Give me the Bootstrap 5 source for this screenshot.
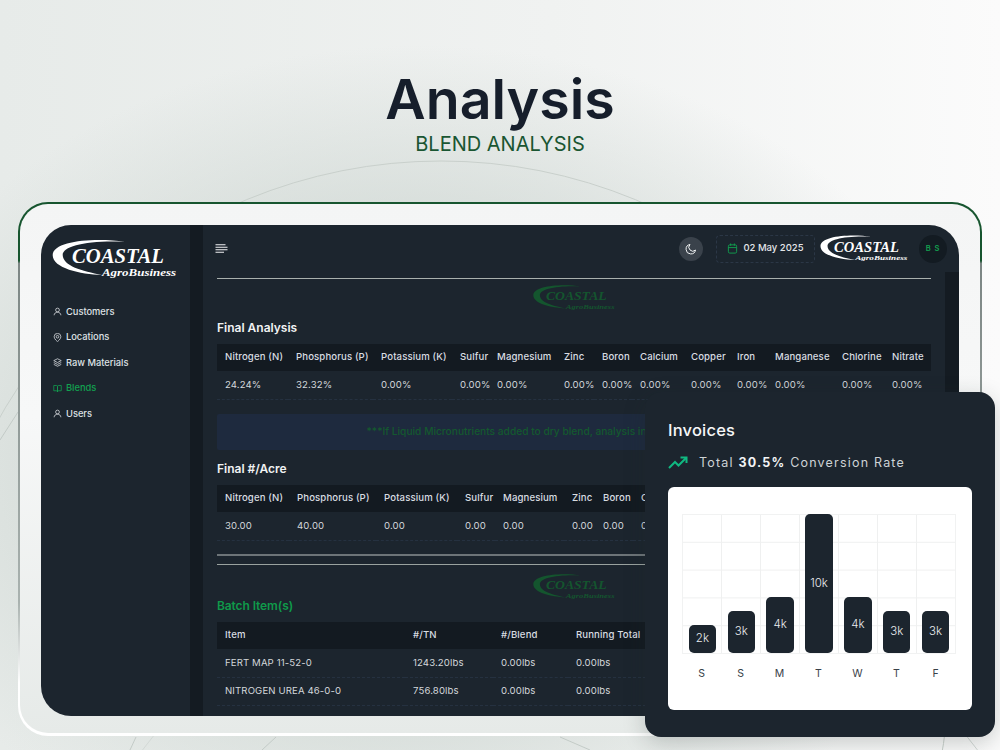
<!DOCTYPE html>
<html lang="en">
<head>
  <meta charset="UTF-8" />
  <meta name="viewport" content="width=device-width, initial-scale=1.0" />
  <title>Blend Analysis</title>
  <link href="https://cdn.jsdelivr.net/npm/bootstrap@5.3.3/dist/css/bootstrap.min.css" rel="stylesheet">
  <style>
    html, body { height: 750px; }
    body {
      width: 1000px;
      overflow: hidden;
      font-family: Inter, "Liberation Sans", sans-serif;
      background:
        radial-gradient(ellipse 560px 420px at 42% 62%, #c6d0cb 0%, rgba(198,208,203,.75) 45%, rgba(198,208,203,0) 100%),
        linear-gradient(90deg, #e7ebe9 0%, #f0f2f1 55%, #fbfbfb 100%);
    }
    .decor { top: 0; left: 0; }
    .page-head { height: 202px; padding-top: 67px; }
    .page-head h1 { font-size: 55.5px; line-height: 64px; font-weight: 600; color: #161e2b; margin: 0; }
    .page-head p { font-size: 20px; line-height: 24px; color: #1a5632; margin: 0; padding-top: 1px; }

    .bezel {
      width: 964px; height: 534px; margin-left: 18px; padding: 2px 2px 3px;
      border-radius: 30px;
      background: linear-gradient(180deg, #17552f 0, #17552f 11%, #7c8684 11.5%, #a9b2af 75%, #ffffff 90%);
    }
    .bezel-in {
      height: 100%; padding: 21px 21px 17px; border-radius: 28px;
      background: linear-gradient(180deg, #f4f5f5 0%, #f7f8f8 40%, #e6eae8 100%);
    }
    .app { height: 491px; border-radius: 30px; overflow: hidden; background: #1c252e; color: #d6dade; }
    .side { width: 149px; padding: 13px 0 0 11px; }
    .gutter { width: 13px; background: #141b22; }
    .brand { display: block; }
    .brand text { font-family: "Liberation Serif", serif; font-style: italic; font-weight: 700; }

    .side-nav { margin-top: 20px; }
    .side-link { height: 25.5px; font-size: 9.3px; font-weight: 500; color: #dfe2e5; gap: 4px; padding: 0 0 0 1px; }
    .side-link.on { color: #12a150; }
    .side-link svg { width: 9px; height: 9px; }

    .topbar { height: 47px; padding: 0 12px 0 12px; }
    .menu-ic { width: 13px; height: 10px; }
    .moon { width: 24px; height: 24px; background: #3a424b; margin-right: 13px; }
    .date-box { width: 99px; height: 28px; border: 1px dashed #2b3746; border-radius: 4px; font-size: 9.5px; font-weight: 500; gap: 5px; margin-right: 5px; color: #e3e6e9; }
    .avatar { width: 28px; height: 28px; background: #131b22; color: #12a150; font-size: 7.5px; font-weight: 600; letter-spacing: 1px; margin-left: 11px; }

    .main-col { width: 742px; padding: 0 14px; overflow: hidden; }
    .scroll-strip { width: 14px; background: #141b22; }
    .rule-a { height: 1px; margin: 6px 0 0; background: #a9b0ad; opacity: 1; border: 0; }
    .faded-logo { display: block; margin: 5px auto 0; }
    .faded-logo.lower { margin-top: 8px; }
    .sec-title { font-size: 12px; line-height: 16px; font-weight: 600; color: #f0f2f3; margin: 0 0 8px; }
    .sec-title.first { margin-top: 9px; }
    .sec-title.green { color: #0f9a4a; margin-top: -2px; letter-spacing: -.1px; }

    .data-grid { table-layout: fixed; width: 714px; margin: 0; font-size: 9.6px; letter-spacing: .12px; white-space: nowrap; --bs-table-bg: transparent; --bs-table-color: #d3d7db; }
    .data-grid th { height: 27px; padding: 0 0 0 8px; background: #131a21; color: #d9dde1; font-weight: 500; border: 0; vertical-align: middle; overflow: hidden; }
    .data-grid td { height: 28px; padding: 0 0 0 8px; border: 0; border-bottom: 1px dashed #253140; color: #d3d7db; vertical-align: middle; }
    .g2 td { height: 29px; }

    .g1 col:nth-child(1) { width: 71px; } .g1 col:nth-child(2) { width: 85px; } .g1 col:nth-child(3) { width: 79px; }
    .g1 col:nth-child(4) { width: 37px; } .g1 col:nth-child(5) { width: 67px; } .g1 col:nth-child(6) { width: 38px; }
    .g1 col:nth-child(7) { width: 38px; } .g1 col:nth-child(8) { width: 51px; } .g1 col:nth-child(9) { width: 46px; }
    .g1 col:nth-child(10) { width: 38px; } .g1 col:nth-child(11) { width: 67px; } .g1 col:nth-child(12) { width: 50px; }
    .g1 col:nth-child(13) { width: 47px; }
    .g2 col:nth-child(1) { width: 72px; } .g2 col:nth-child(2) { width: 87px; } .g2 col:nth-child(3) { width: 81px; }
    .g2 col:nth-child(4) { width: 38px; } .g2 col:nth-child(5) { width: 69px; } .g2 col:nth-child(6) { width: 31px; }
    .g2 col:nth-child(7) { width: 38px; } .g2 col:nth-child(8) { width: 50px; } .g2 col:nth-child(9) { width: 46px; }
    .g2 col:nth-child(10) { width: 36px; } .g2 col:nth-child(11) { width: 66px; } .g2 col:nth-child(12) { width: 50px; }
    .g2 col:nth-child(13) { width: 50px; }
    .g3 col:nth-child(1) { width: 188px; } .g3 col:nth-child(2) { width: 88px; } .g3 col:nth-child(3) { width: 75px; }
    .g3 col:nth-child(4) { width: 363px; }

    .note-box { height: 36px; margin: 14px 0 11px; background: #1e2a3e; color: #14592f; font-size: 10.2px; font-weight: 500; border: 0; border-radius: 2px; padding: 0; white-space: nowrap; }
    .rule-b { height: 2px; margin: 13px 0 0; background: #6d7478; border: 0; opacity: 1; }
    .rule-c { height: 1px; margin: 8px 0 0; background: #9aa29f; border: 0; opacity: 1; }

    .invoice-card { left: 645px; top: 392px; width: 350px; height: 345px; padding: 27px 23px 0; background: #1c252e; border-radius: 16px; box-shadow: 0 6px 22px rgba(30,45,40,.22); }
    .invoice-card h2 { font-size: 16.5px; line-height: 22px; font-weight: 500; color: #f6f7f8; letter-spacing: .2px; margin: 0; }
    .rate-line { margin-top: 13px; font-size: 12.5px; line-height: 18px; letter-spacing: 1.2px; color: #ced3d6; gap: 11px; }
    .rate-line b { color: #f2f4f5; font-weight: 700; }
    .chart-panel { width: 304px; height: 223px; margin-top: 15px; padding: 27px 16px 0 14px; background: #fff; border-radius: 6px; }
    .chart-area {
      height: 140px; border: 1px solid #f1f2f2;
      background-image: linear-gradient(#eff0f0 1px, transparent 1px), linear-gradient(90deg, #eff0f0 1px, transparent 1px);
      background-size: 39px 27.8px; background-position: -1px -1px;
    }
    .day-col { width: 39px; }
    .day-bar { width: 27.5px; background: #1c252e; color: #eceef0; font-size: 11.5px; font-weight: 300; border-radius: 5px; }
    .day-name { width: 39px; font-size: 10.5px; color: #3a4148; padding-top: 12px; }
  </style>
</head>
<body class="position-relative">

  <!-- faint arcs behind everything -->
  <svg class="decor position-absolute" width="1000" height="750" fill="none" stroke="#c9d0cc" stroke-width="1">
    <circle cx="441" cy="669" r="508" />
    <circle cx="560" cy="1060" r="520" stroke="#d3d9d6" />
    <path d="M0 440 L18 412 M130 750 L136 737 M262 750 L276 737 M560 737 L590 750" stroke="#c3cbc7" />
  </svg>

  <header class="page-head text-center position-relative">
    <h1>Analysis</h1>
    <p>BLEND ANALYSIS</p>
  </header>

  <div class="bezel position-relative">
    <div class="bezel-in">
      <div class="app d-flex">

        <aside class="side flex-shrink-0">
          <svg class="brand" width="125" height="41" viewBox="0 0 125 41" fill="#fff">
            <path d="M73 3.7C45-.5 1 2 .7 17 .5 30 28 36 50 37 30 33 11 28 10.7 17 10.5 8 35 2 73 3.7Z" />
            <text x="20" y="25" font-size="20" textLength="92" lengthAdjust="spacingAndGlyphs">COASTAL</text>
            <text x="50" y="37.500" font-size="10" textLength="74" lengthAdjust="spacingAndGlyphs">AgroBusiness</text>
          </svg>
          <nav class="side-nav nav flex-column">
            <a class="side-link nav-link d-flex align-items-center" href="#">
              <svg viewBox="0 0 24 24" fill="none" stroke="currentColor" stroke-width="2"><circle cx="12" cy="8" r="5"/><path d="M3 22c0-5 4-8 9-8s9 3 9 8"/></svg>Customers</a>
            <a class="side-link nav-link d-flex align-items-center" href="#">
              <svg viewBox="0 0 24 24" fill="none" stroke="currentColor" stroke-width="2"><path d="M12 23S3 16 3 10a9 9 0 0 1 18 0c0 6-9 13-9 13Z"/><circle cx="12" cy="10" r="3.5"/></svg>Locations</a>
            <a class="side-link nav-link d-flex align-items-center" href="#">
              <svg viewBox="0 0 24 24" fill="none" stroke="currentColor" stroke-width="2"><path d="M12 2 22 7 12 12 2 7Z"/><path d="M2 12l10 5 10-5"/><path d="M2 17l10 5 10-5"/></svg>Raw Materials</a>
            <a class="side-link on nav-link d-flex align-items-center" href="#">
              <svg viewBox="0 0 24 24" fill="none" stroke="currentColor" stroke-width="2"><path d="M2 4h7a3 3 0 0 1 3 3v14a3 3 0 0 0-3-3H2Z"/><path d="M22 4h-7a3 3 0 0 0-3 3v14a3 3 0 0 1 3-3h7Z"/></svg>Blends</a>
            <a class="side-link nav-link d-flex align-items-center" href="#">
              <svg viewBox="0 0 24 24" fill="none" stroke="currentColor" stroke-width="2"><circle cx="12" cy="8" r="5"/><path d="M3 22c0-5 4-8 9-8s9 3 9 8"/></svg>Users</a>
          </nav>
        </aside>

        <div class="gutter flex-shrink-0"></div>

        <div class="flex-grow-1 d-flex flex-column">
          <div class="topbar d-flex align-items-center">
            <svg class="menu-ic" viewBox="0 0 13 10" fill="none" stroke="#eef0f2" stroke-width="1.1">
              <path d="M.5 .8h10M.5 3.3h12M.5 5.8h12M.5 8.3h8.5"/>
            </svg>
            <div class="ms-auto moon rounded-circle d-flex align-items-center justify-content-center">
              <svg width="12" height="12" viewBox="0 0 24 24" fill="none" stroke="#f0f2f3" stroke-width="2"><path d="M21 14A9.5 9.5 0 1 1 10 3a7.5 7.5 0 0 0 11 11Z"/></svg>
            </div>
            <div class="date-box d-flex align-items-center justify-content-center">
              <svg width="11" height="11" viewBox="0 0 24 24" fill="none" stroke="#12a150" stroke-width="2"><rect x="3" y="4" width="18" height="18" rx="3"/><path d="M3 10h18M8 1v5M16 1v5"/></svg>
              <span>02 May 2025</span>
            </div>
            <svg class="brand" width="88" height="29" viewBox="0 0 125 41" fill="#fff">
              <path d="M73 3.7C45-.5 1 2 .7 17 .5 30 28 36 50 37 30 33 11 28 10.7 17 10.5 8 35 2 73 3.7Z" />
              <text x="20" y="25" font-size="20" textLength="92" lengthAdjust="spacingAndGlyphs">COASTAL</text>
              <text x="50" y="37.500" font-size="10" textLength="74" lengthAdjust="spacingAndGlyphs">AgroBusiness</text>
            </svg>
            <div class="avatar rounded-circle d-flex align-items-center justify-content-center">B S</div>
          </div>

          <div class="d-flex flex-grow-1">
            <main class="main-col">
              <hr class="rule-a">
              <svg class="brand faded-logo" width="86" height="27" viewBox="0 0 125 41" fill="#14552e">
                <path d="M73 3.7C45-.5 1 2 .7 17 .5 30 28 36 50 37 30 33 11 28 10.7 17 10.5 8 35 2 73 3.7Z" />
                <text x="20" y="25" font-size="20" textLength="92" lengthAdjust="spacingAndGlyphs">COASTAL</text>
                <text x="50" y="37.500" font-size="10" textLength="74" lengthAdjust="spacingAndGlyphs">AgroBusiness</text>
              </svg>

              <h5 class="sec-title first">Final Analysis</h5>
              <table class="table data-grid g1">
                <colgroup><col><col><col><col><col><col><col><col><col><col><col><col><col></colgroup>
                <thead><tr><th>Nitrogen (N)</th><th>Phosphorus (P)</th><th>Potassium (K)</th><th>Sulfur</th><th>Magnesium</th><th>Zinc</th><th>Boron</th><th>Calcium</th><th>Copper</th><th>Iron</th><th>Manganese</th><th>Chlorine</th><th>Nitrate</th></tr></thead>
                <tbody><tr><td>24.24%</td><td>32.32%</td><td>0.00%</td><td>0.00%</td><td>0.00%</td><td>0.00%</td><td>0.00%</td><td>0.00%</td><td>0.00%</td><td>0.00%</td><td>0.00%</td><td>0.00%</td><td>0.00%</td></tr></tbody>
              </table>

              <div class="note-box alert d-flex align-items-center justify-content-center">***If Liquid Micronutrients added to dry blend, analysis includes liquid micronutrients</div>

              <h5 class="sec-title">Final #/Acre</h5>
              <table class="table data-grid g2">
                <colgroup><col><col><col><col><col><col><col><col><col><col><col><col><col></colgroup>
                <thead><tr><th>Nitrogen (N)</th><th>Phosphorus (P)</th><th>Potassium (K)</th><th>Sulfur</th><th>Magnesium</th><th>Zinc</th><th>Boron</th><th>Calcium</th><th>Copper</th><th>Iron</th><th>Manganese</th><th>Chlorine</th><th>Nitrate</th></tr></thead>
                <tbody><tr><td>30.00</td><td>40.00</td><td>0.00</td><td>0.00</td><td>0.00</td><td>0.00</td><td>0.00</td><td>0.00</td><td>0.00</td><td>0.00</td><td>0.00</td><td>0.00</td><td>0.00</td></tr></tbody>
              </table>

              <hr class="rule-b">
              <hr class="rule-c">
              <svg class="brand faded-logo lower" width="86" height="27" viewBox="0 0 125 41" fill="#14552e">
                <path d="M73 3.7C45-.5 1 2 .7 17 .5 30 28 36 50 37 30 33 11 28 10.7 17 10.5 8 35 2 73 3.7Z" />
                <text x="20" y="25" font-size="20" textLength="92" lengthAdjust="spacingAndGlyphs">COASTAL</text>
                <text x="50" y="37.500" font-size="10" textLength="74" lengthAdjust="spacingAndGlyphs">AgroBusiness</text>
              </svg>

              <h5 class="sec-title green">Batch Item(s)</h5>
              <table class="table data-grid g3">
                <colgroup><col><col><col><col></colgroup>
                <thead><tr><th>Item</th><th>#/TN</th><th>#/Blend</th><th>Running Total</th></tr></thead>
                <tbody>
                  <tr><td>FERT MAP 11-52-0</td><td>1243.20lbs</td><td>0.00lbs</td><td>0.00lbs</td></tr>
                  <tr><td>NITROGEN UREA 46-0-0</td><td>756.80lbs</td><td>0.00lbs</td><td>0.00lbs</td></tr>
                </tbody>
              </table>
            </main>
            <div class="scroll-strip flex-shrink-0"></div>
          </div>
        </div>
      </div>
    </div>
  </div>

  <!-- floating card lies over the app -->
  <section class="invoice-card position-absolute">
    <h2>Invoices</h2>
    <div class="rate-line d-flex align-items-center">
      <svg width="20" height="14" viewBox="0 0 20 14" fill="none" stroke="#10b981" stroke-width="2"><path d="M1 12l6-6 3.5 3.5L18 2"/><path d="M12.5 1.5H18.500V7"/></svg>
      <span>Total <b>30.5%</b> Conversion Rate</span>
    </div>
    <div class="chart-panel">
      <div class="chart-area d-flex align-items-end">
        <div class="day-col d-flex justify-content-center"><div class="day-bar d-flex align-items-center justify-content-center" style="height:28px">2k</div></div>
        <div class="day-col d-flex justify-content-center"><div class="day-bar d-flex align-items-center justify-content-center" style="height:42px">3k</div></div>
        <div class="day-col d-flex justify-content-center"><div class="day-bar d-flex align-items-center justify-content-center" style="height:56px">4k</div></div>
        <div class="day-col d-flex justify-content-center"><div class="day-bar d-flex align-items-center justify-content-center" style="height:139px">10k</div></div>
        <div class="day-col d-flex justify-content-center"><div class="day-bar d-flex align-items-center justify-content-center" style="height:56px">4k</div></div>
        <div class="day-col d-flex justify-content-center"><div class="day-bar d-flex align-items-center justify-content-center" style="height:42px">3k</div></div>
        <div class="day-col d-flex justify-content-center"><div class="day-bar d-flex align-items-center justify-content-center" style="height:42px">3k</div></div>
      </div>
      <div class="d-flex text-center">
        <div class="day-name">S</div><div class="day-name">S</div><div class="day-name">M</div><div class="day-name">T</div><div class="day-name">W</div><div class="day-name">T</div><div class="day-name">F</div>
      </div>
    </div>
  </section>

  <script src="https://cdn.jsdelivr.net/npm/bootstrap@5.3.3/dist/js/bootstrap.bundle.min.js"></script>
</body>
</html>
